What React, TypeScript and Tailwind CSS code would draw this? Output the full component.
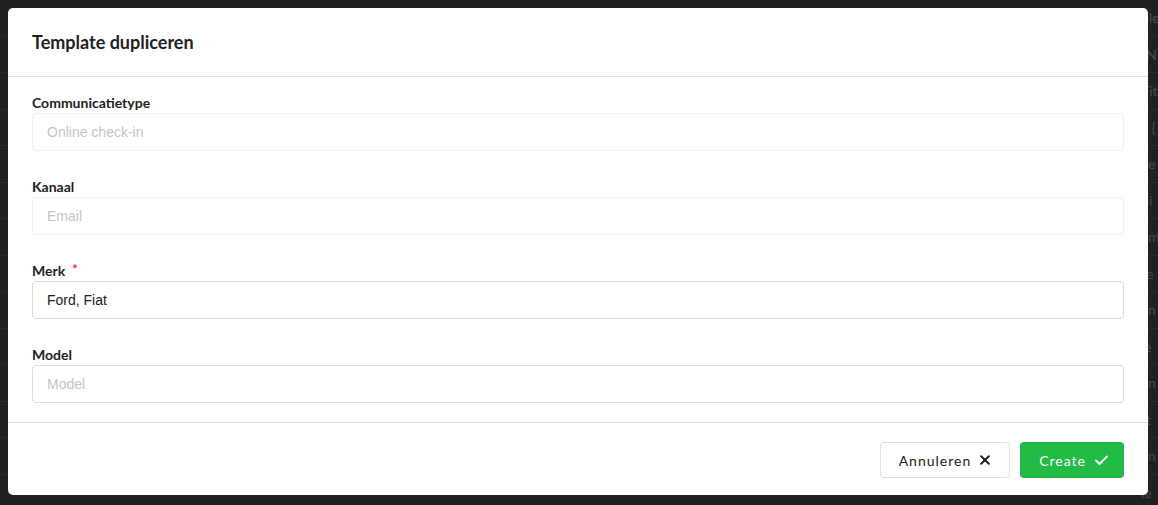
import React from 'react';

const bgRows = ['ole', 'rN', 'Tit', 'l: {', 've', 'oi', 'am', 'te', 'an', 'le', 'an', 'rt', 'an', 'le'];

const XIcon = () => (
  <svg width="10" height="10" viewBox="0 0 10 10" fill="none" stroke="currentColor" strokeWidth="2" strokeLinecap="round">
    <path d="M1.2 1.2l7.6 7.6M8.8 1.2l-7.6 7.6" />
  </svg>
);

const CheckIcon = () => (
  <svg width="15" height="14" viewBox="0 0 15 14" fill="none" stroke="currentColor" strokeWidth="1.8" strokeLinecap="round" strokeLinejoin="round">
    <path d="M2 7.5l3.5 3.5L13 3.5" />
  </svg>
);

type FieldProps = {
  label: string;
  value?: string;
  placeholder: string;
  disabled?: boolean;
  required?: boolean;
  last?: boolean;
};

const Field: React.FC<FieldProps> = ({ label, value, placeholder, disabled, required, last }) => (
  <div className={last ? '' : 'mb-[26px]'}>
    <div className="flex h-5 items-start text-[14px] leading-5 font-bold text-[#222]">
      <span>{label}</span>
      {required && <span className="ml-[7px] -mt-[2px] text-[13px] text-[#ff2020]">*</span>}
    </div>
    <div
      className={`flex h-[38px] items-center rounded-[4px] border px-[14px] text-[14px] ${
        disabled ? 'border-[#f1f1f1]' : 'border-[#dadada]'
      }`}
      style={{ fontFamily: '"Liberation Sans", Arial, sans-serif' }}
    >
      {value ? <span className="text-[#222]">{value}</span> : <span className="text-[#c4c4c4]">{placeholder}</span>}
    </div>
  </div>
);

export default function App() {
  return (
    <div className="relative h-[505px] w-[1158px] overflow-hidden bg-[#212121]" style={{ fontFamily: 'Lato, "Liberation Sans", sans-serif' }}>
      {/* dimmed page behind the dialog */}
      <div className="flex flex-col">
        {bgRows.map((t, i) => (
          <div key={i} className="flex h-[36.5px] items-center border-b border-[#2a2a2a] pl-[1141px] text-[14px] text-[#4a4a4a]">
            {t}
          </div>
        ))}
      </div>

      {/* dialog */}
      <div className="absolute left-[8px] top-[8px] flex h-[487px] w-[1140px] flex-col rounded-[5px] bg-white">
        <div className="flex h-[69px] items-center border-b border-[#e2e2e2] px-6 pt-[1px]">
          <h2 className="text-[18px] font-bold text-[#222]">Template dupliceren</h2>
        </div>

        <div className="px-6 pt-4 pb-[19px]">
          <Field label="Communicatietype" placeholder="Online check-in" disabled />
          <Field label="Kanaal" placeholder="Email" disabled />
          <Field label="Merk" value="Ford, Fiat" placeholder="Merk" required />
          <Field label="Model" placeholder="Model" last />
        </div>

        <div className="flex flex-1 items-start justify-end gap-[10px] border-t border-[#e2e2e2] px-6 pt-[19px]">
          <button className="flex h-[36px] items-center gap-[9px] rounded-[4px] border border-[#dedede] bg-white pl-[18px] pr-[19px] text-[14px] tracking-[1px] text-[#222]">
            Annuleren
            <XIcon />
          </button>
          <button className="flex h-[36px] items-center gap-[8px] rounded-[4px] bg-[#22bb45] pl-[19px] pr-[15px] text-[14px] tracking-[1px] text-white">
            Create
            <CheckIcon />
          </button>
        </div>
      </div>
    </div>
  );
}
